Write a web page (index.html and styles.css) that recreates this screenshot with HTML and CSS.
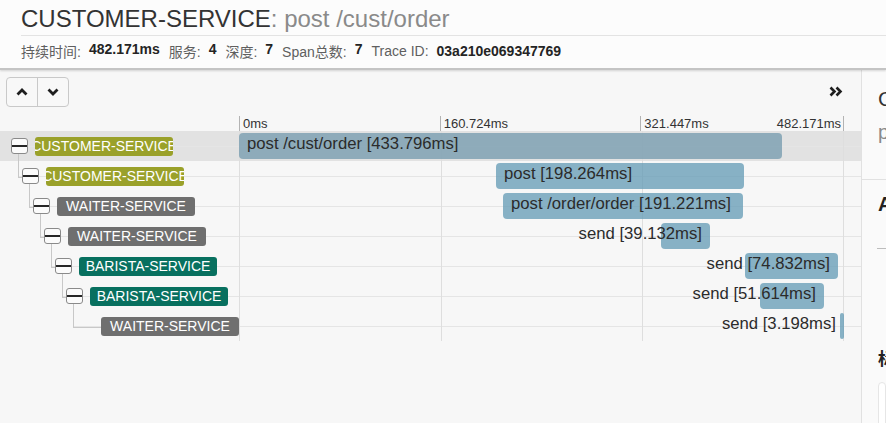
FILE: index.html
```html
<!DOCTYPE html>
<html lang="zh">
<head>
<meta charset="utf-8">
<title>Trace</title>
<link rel="stylesheet" href="styles.css">
</head>
<body>
<header class="header">
  <h1 class="title"><span class="svc">CUSTOMER-SERVICE</span><span class="op">: post /cust/order</span></h1>
  <div class="info">
    <span class="item"><span class="lbl">持续时间:</span><b>482.171ms</b></span>
    <span class="item"><span class="lbl">服务:</span><b>4</b></span>
    <span class="item"><span class="lbl">深度:</span><b>7</b></span>
    <span class="item"><span class="lbl">Span总数:</span><b>7</b></span>
    <span class="item"><span class="lbl">Trace ID:</span><b>03a210e069347769</b></span>
  </div>
</header>
<main class="main">
  <section class="trace">
    <div class="toolbar">
      <div class="btn-group">
        <button class="btn" type="button"><svg width="12" height="8" viewBox="0 0 12 8"><path d="M1.5 6.5 L6 2 L10.5 6.5" fill="none" stroke="#1e1e1e" stroke-width="2.8"/></svg></button>
        <button class="btn" type="button"><svg width="12" height="8" viewBox="0 0 12 8"><path d="M1.5 1.5 L6 6 L10.5 1.5" fill="none" stroke="#1e1e1e" stroke-width="2.8"/></svg></button>
      </div>
      <button class="expand" type="button"><svg width="14" height="11" viewBox="0 0 14 11"><path d="M1.5 1.5 L5.5 5.5 L1.5 9.5 M7.5 1.5 L11.5 5.5 L7.5 9.5" fill="none" stroke="#1e1e1e" stroke-width="2.6"/></svg></button>
    </div>
    <div class="axis">
      <div class="axis-spacer"></div>
      <div class="scale">
        <div class="tick">0ms</div>
        <div class="tick">160.724ms</div>
        <div class="tick last"><span>321.447ms</span><span>482.171ms</span></div>
      </div>
    </div>
    <div class="rows">
      <div class="row selected">
        <div class="tree l0"><span class="toggle"></span><span class="badge customer"><span>CUSTOMER-SERVICE</span></span></div>
        <div class="timeline"><div class="bar" style="margin-left:0px;width:543px"><span class="bar-label">post /cust/order [433.796ms]</span></div></div>
      </div>
      <div class="row">
        <div class="tree l1"><span class="toggle"></span><span class="badge customer"><span>CUSTOMER-SERVICE</span></span></div>
        <div class="timeline"><div class="bar" style="margin-left:257px;width:248px"><span class="bar-label">post [198.264ms]</span></div></div>
      </div>
      <div class="row">
        <div class="tree l2"><span class="toggle"></span><span class="badge waiter"><span>WAITER-SERVICE</span></span></div>
        <div class="timeline"><div class="bar" style="margin-left:264px;width:240px"><span class="bar-label">post /order/order [191.221ms]</span></div></div>
      </div>
      <div class="row">
        <div class="tree l3"><span class="toggle"></span><span class="badge waiter"><span>WAITER-SERVICE</span></span></div>
        <div class="timeline"><div class="bar end" style="margin-left:422px;width:49px"><span class="bar-label">send [39.132ms]</span></div></div>
      </div>
      <div class="row">
        <div class="tree l4"><span class="toggle"></span><span class="badge barista"><span>BARISTA-SERVICE</span></span></div>
        <div class="timeline"><div class="bar end" style="margin-left:506px;width:93px"><span class="bar-label">send [74.832ms]</span></div></div>
      </div>
      <div class="row">
        <div class="tree l5"><span class="toggle"></span><span class="badge barista"><span>BARISTA-SERVICE</span></span></div>
        <div class="timeline"><div class="bar end" style="margin-left:521px;width:64px"><span class="bar-label">send [51.614ms]</span></div></div>
      </div>
      <div class="row">
        <div class="tree l6 leaf"><span class="toggle none"></span><span class="badge waiter"><span>WAITER-SERVICE</span></span></div>
        <div class="timeline"><div class="bar end" style="margin-left:601px;width:4px"><span class="bar-label">send [3.198ms]</span></div></div>
      </div>
    </div>
  </section>
  <aside class="detail">
    <div class="detail-head">
      <div class="detail-title">CUSTOMER-SERVICE</div>
      <div class="detail-sub">post /cust/order</div>
    </div>
    <div class="detail-body">
      <div class="section-title">Annotations</div>
      <div class="section-rule"></div>
      <div class="tags-title">标签</div>
      <div class="tags-box"></div>
    </div>
  </aside>
</main>
</body>
</html>
```

FILE: styles.css
```css
* { box-sizing: border-box; }

html, body {
  margin: 0;
  height: 423px;
  overflow: hidden;
}

body {
  font-family: "Liberation Sans", "Noto Sans CJK SC", sans-serif;
  background: #f7f7f7;
  color: #333;
}

/* ---------- header ---------- */
.header {
  height: 70px;
  background: #fcfcfc;
  border-bottom: 2px solid #c4c4c4;
  box-shadow: 0 1px 2px rgba(0, 0, 0, 0.15);
  position: relative;
  z-index: 2;
}

.title {
  margin: 0 0 0 21px;
  padding-top: 2px;
  height: 36px;
  line-height: 33px;
  font-size: 24px;
  font-weight: normal;
  white-space: nowrap;
  border-bottom: 1px solid #e3e3e3;
}

.svc { color: #333; }
.op { color: #8a8a8a; }

.info {
  display: flex;
  align-items: center;
  gap: 9px;
  height: 30px;
  padding-left: 21px;
  font-size: 14px;
  white-space: nowrap;
}

.item {
  display: flex;
  gap: 8px;
}

.lbl { color: #5f5f5f; }
.item b { color: #242424; font-weight: bold; }

/* ---------- main ---------- */
.main {
  display: flex;
  height: 353px;
}

.trace {
  width: 861px;
  flex: none;
}

.toolbar {
  height: 46px;
  padding: 7px 18px 0 6px;
  display: flex;
  justify-content: space-between;
  align-items: flex-start;
}

.btn-group {
  display: flex;
  height: 30px;
  border: 1px solid #c9c9c9;
  border-radius: 4px;
  overflow: hidden;
  background: #f8f8f8;
}

.btn {
  width: 30px;
  height: 28px;
  padding: 0;
  border: none;
  background: transparent;
  display: flex;
  align-items: center;
  justify-content: center;
}

.btn + .btn { border-left: 1px solid #c9c9c9; width: 31px; }

.expand {
  margin-top: 9px;
  padding: 0;
  border: none;
  background: transparent;
  display: flex;
  width: 14px;
  height: 11px;
}

/* ---------- axis ---------- */
.axis {
  display: flex;
  height: 15px;
}

.axis-spacer { width: 239px; flex: none; }

.scale {
  width: 605px;
  display: flex;
}

.tick {
  flex: 1;
  border-left: 1px solid #b3b3b3;
  padding-left: 3px;
  font-size: 13px;
  line-height: 15px;
  color: #333;
  white-space: nowrap;
}

.tick.last {
  border-right: 1px solid #b3b3b3;
  display: flex;
  justify-content: space-between;
  padding-right: 2px;
}

/* ---------- rows ---------- */
.row {
  display: flex;
  height: 30px;
}

.row.selected { background: #e2e2e2; }

.tree {
  width: 239px;
  flex: none;
  position: relative;
  display: flex;
  align-items: center;
  gap: 7px;
}

.tree::before {
  content: "";
  position: absolute;
  top: 15px;
  right: 0;
  height: 1px;
  background: #e5e5e5;
}

.tree::after {
  content: "";
  position: absolute;
  top: -7px;
  height: 23px;
  width: 5px;
  border-left: 1px solid #c8c8c8;
  border-bottom: 1px solid #c8c8c8;
}

.l0 { padding-left: 11px; }
.l0::before { left: 11px; }
.l0::after { display: none; }
.l1 { padding-left: 22px; }
.l1::before, .l1::after { left: 18px; }
.l2 { padding-left: 33px; }
.l2::before, .l2::after { left: 29px; }
.l3 { padding-left: 44px; }
.l3::before, .l3::after { left: 40px; }
.l4 { padding-left: 55px; }
.l4::before, .l4::after { left: 51px; }
.l5 { padding-left: 66px; }
.l5::before, .l5::after { left: 62px; }
.l6 { padding-left: 77px; }
.l6::before, .l6::after { left: 73px; }
.leaf::after { width: 28px; }

.toggle {
  width: 17px;
  height: 16px;
  flex: none;
  border: 1px solid #8a8a8a;
  border-radius: 3px;
  background: #fbfbfb;
  position: relative;
  z-index: 1;
}

.toggle::after {
  content: "";
  position: absolute;
  left: 0;
  right: 0;
  top: 6px;
  height: 2px;
  background: #262626;
}

.toggle.none { visibility: hidden; }

.badge {
  width: 138px;
  height: 19px;
  flex: none;
  border-radius: 3px;
  color: #fff;
  font-size: 14px;
  line-height: 19px;
  display: flex;
  justify-content: center;
  overflow: hidden;
  white-space: nowrap;
  position: relative;
  z-index: 1;
}

.badge span { flex: none; }

.customer { background: #9aa12a; }
.waiter { background: #6f6f6f; }
.barista { background: #08705f; }

.timeline {
  flex: 1;
  display: flex;
  align-items: center;
  background-image:
    linear-gradient(#dedede, #dedede),
    linear-gradient(#dedede, #dedede),
    linear-gradient(#dedede, #dedede),
    linear-gradient(#dedede, #dedede),
    linear-gradient(#e5e5e5, #e5e5e5);
  background-size: 1px 100%, 1px 100%, 1px 100%, 1px 100%, 100% 1px;
  background-position: 0 0, 202px 0, 403px 0, 604px 0, 0 15px;
  background-repeat: no-repeat;
}

.bar {
  flex: none;
  height: 26px;
  padding-top: 1px;
  border-radius: 4px;
  background: rgba(100, 155, 182, 0.76);
  display: flex;
  align-items: flex-start;
  font-size: 16.7px;
  line-height: 20px;
  color: #2b2b2b;
  white-space: nowrap;
}

.selected .bar { background: rgba(110, 150, 170, 0.72); }

.bar.end { justify-content: flex-end; }

.bar-label {
  flex: none;
  padding: 0 8px;
}

/* ---------- detail panel ---------- */
.detail {
  flex: 1;
  min-width: 0;
  border-left: 1px solid #e1e1e1;
  background: #fafafa;
  overflow: hidden;
  white-space: nowrap;
}

.detail-head {
  height: 110px;
  padding: 16px 0 0 16px;
  border-bottom: 1px solid #e1e1e1;
}

.detail-title {
  font-size: 21px;
  line-height: 26px;
  color: #333;
}

.detail-sub {
  margin-top: 8px;
  font-size: 20px;
  line-height: 24px;
  color: #8a8a8a;
}

.detail-body {
  padding: 12px 0 0 16px;
}

.section-title {
  font-size: 20px;
  font-weight: bold;
  line-height: 24px;
  color: #222;
}

.section-rule {
  margin: 32px 0 0 -1px;
  height: 1px;
  background: #bdbdbd;
}

.tags-title {
  margin-top: 99px;
  font-size: 17px;
  font-weight: bold;
  line-height: 24px;
  color: #222;
}

.tags-box {
  margin-top: 10px;
  height: 60px;
  background: #fff;
  border: 1px solid #e6e6e6;
  border-radius: 4px;
}
```
